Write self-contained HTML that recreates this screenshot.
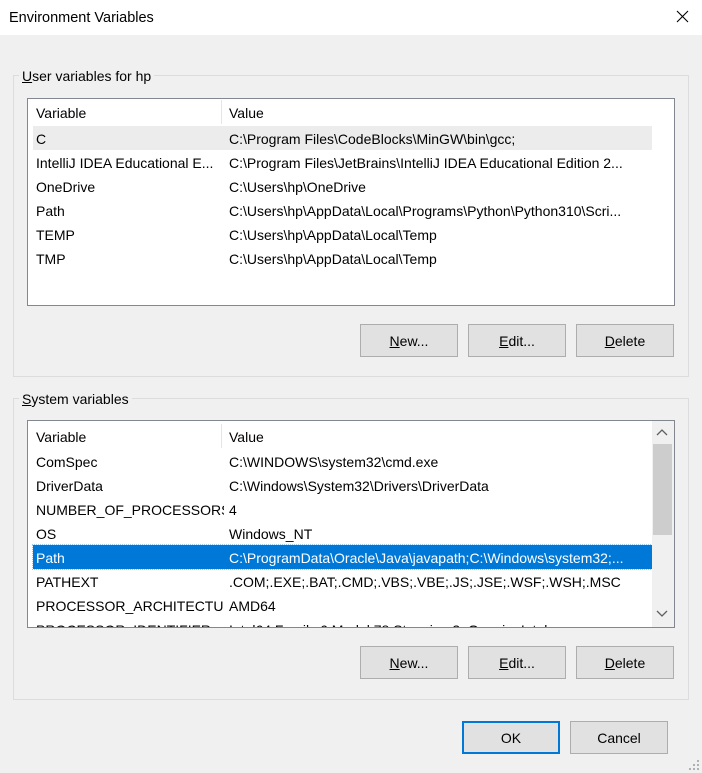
<!DOCTYPE html>
<html><head><style>
*{margin:0;padding:0;box-sizing:border-box}
body{width:702px;height:773px;background:#f0f0f0;font-family:"Liberation Sans",sans-serif;font-size:14px;color:#000;position:relative;overflow:hidden}
.a{position:absolute;white-space:nowrap}
.title{left:0;top:0;width:702px;height:35px;background:#fff}
.grp{border:1px solid #dcdcdc}
.lbl{background:#f0f0f0;padding:0 3px;line-height:18px}
.list{background:#fff;border:1px solid #828790;overflow:hidden}
.row{position:absolute;left:5px;height:24px;line-height:26px;width:619px}
.row span{position:absolute;overflow:hidden}
.row .v{left:3px;width:188px}.row .w{left:196px}
.btn{background:#e1e1e1;border:1px solid #adadad;height:33px;line-height:33px;text-align:center;width:98px}
u{text-decoration:underline}
</style></head><body>
<div class="a title"><span class="a" style="left:9px;top:10px;font-size:14.5px">Environment Variables</span>
<svg class="a" style="left:676px;top:10px" width="13" height="13"><path d="M1 1L12 12M12 1L1 12" stroke="#000" stroke-width="1.1"/></svg></div>

<div class="a grp" style="left:13px;top:75px;width:676px;height:302px"></div>
<div class="a lbl" style="left:19px;top:67px"><u>U</u>ser variables for hp</div>
<div class="a list" style="left:27px;top:98px;width:648px;height:208px">
 <div class="row" style="top:1px;background:#fff"><span class="v">Variable</span><span class="w">Value</span></div>
 <div class="a" style="left:193px;top:1px;width:1px;height:24px;background:#e5e5e5"></div>
 <div class="row" style="top:27px;background:#ececec"><span class="v">C</span><span class="w">C:\Program Files\CodeBlocks\MinGW\bin\gcc;</span></div>
 <div class="row" style="top:51px"><span class="v">IntelliJ IDEA Educational E...</span><span class="w">C:\Program Files\JetBrains\IntelliJ IDEA Educational Edition 2...</span></div>
 <div class="row" style="top:75px"><span class="v">OneDrive</span><span class="w">C:\Users\hp\OneDrive</span></div>
 <div class="row" style="top:99px"><span class="v">Path</span><span class="w">C:\Users\hp\AppData\Local\Programs\Python\Python310\Scri...</span></div>
 <div class="row" style="top:123px"><span class="v">TEMP</span><span class="w">C:\Users\hp\AppData\Local\Temp</span></div>
 <div class="row" style="top:147px"><span class="v">TMP</span><span class="w">C:\Users\hp\AppData\Local\Temp</span></div>
</div>
<div class="a btn" style="left:360px;top:324px"><u>N</u>ew...</div>
<div class="a btn" style="left:468px;top:324px"><u>E</u>dit...</div>
<div class="a btn" style="left:576px;top:324px"><u>D</u>elete</div>

<div class="a grp" style="left:13px;top:398px;width:676px;height:302px"></div>
<div class="a lbl" style="left:19px;top:390px"><u>S</u>ystem variables</div>
<div class="a list" style="left:27px;top:420px;width:648px;height:208px">
 <div class="row" style="top:3px"><span class="v">Variable</span><span class="w">Value</span></div>
 <div class="a" style="left:193px;top:3px;width:1px;height:24px;background:#e5e5e5"></div>
 <div class="row" style="top:28px"><span class="v">ComSpec</span><span class="w">C:\WINDOWS\system32\cmd.exe</span></div>
 <div class="row" style="top:52px"><span class="v">DriverData</span><span class="w">C:\Windows\System32\Drivers\DriverData</span></div>
 <div class="row" style="top:76px"><span class="v">NUMBER_OF_PROCESSORS</span><span class="w">4</span></div>
 <div class="row" style="top:100px"><span class="v">OS</span><span class="w">Windows_NT</span></div>
 <div class="row" style="top:124px;background:#0078d7;color:#fff;outline:1px dotted #99c9ef"><span class="v">Path</span><span class="w">C:\ProgramData\Oracle\Java\javapath;C:\Windows\system32;...</span></div>
 <div class="row" style="top:148px"><span class="v">PATHEXT</span><span class="w">.COM;.EXE;.BAT;.CMD;.VBS;.VBE;.JS;.JSE;.WSF;.WSH;.MSC</span></div>
 <div class="row" style="top:172px"><span class="v">PROCESSOR_ARCHITECTU...</span><span class="w">AMD64</span></div>
 <div class="row" style="top:196px"><span class="v">PROCESSOR_IDENTIFIER</span><span class="w">Intel64 Family 6 Model 78 Stepping 3, GenuineIntel</span></div>
 <div class="a" style="left:624px;top:0;width:23px;height:206px;background:#f0f0f0"></div>
 <div class="a" style="left:625px;top:23px;width:19px;height:91px;background:#cdcdcd"></div>
 <svg class="a" style="left:628px;top:7px" width="12" height="8"><path d="M1 7L6 2L11 7" fill="none" stroke="#606060" stroke-width="1.3"/></svg>
 <svg class="a" style="left:628px;top:189px" width="12" height="8"><path d="M1 1L6 6L11 1" fill="none" stroke="#606060" stroke-width="1.3"/></svg>
</div>
<div class="a btn" style="left:360px;top:646px"><u>N</u>ew...</div>
<div class="a btn" style="left:468px;top:646px"><u>E</u>dit...</div>
<div class="a btn" style="left:576px;top:646px"><u>D</u>elete</div>

<div class="a btn" style="left:462px;top:721px;border:2px solid #0078d7;line-height:31px">OK</div>
<div class="a btn" style="left:570px;top:721px">Cancel</div>
<svg class="a" style="left:689px;top:760px" width="12" height="12" fill="#b0b0b0"><rect x="8" y="0" width="2" height="2"/><rect x="4" y="4" width="2" height="2"/><rect x="8" y="4" width="2" height="2"/><rect x="0" y="8" width="2" height="2"/><rect x="4" y="8" width="2" height="2"/><rect x="8" y="8" width="2" height="2"/></svg>
</body></html>
